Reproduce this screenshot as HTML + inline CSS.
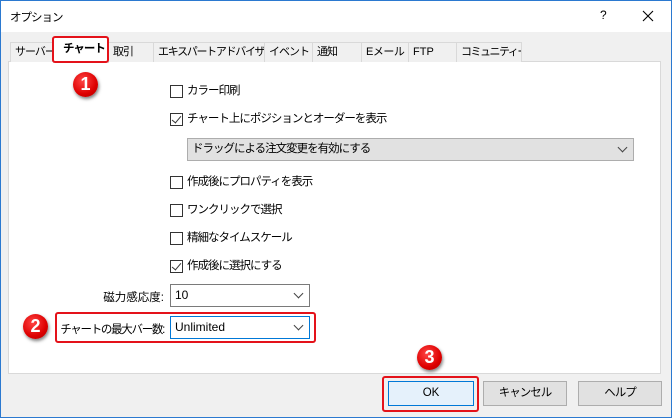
<!DOCTYPE html>
<html><head><meta charset="utf-8"><style>
*{margin:0;padding:0;box-sizing:border-box}
body{width:672px;height:418px;overflow:hidden;background:#f0f0f0;font-family:"Liberation Sans","Noto Sans CJK JP",sans-serif;font-size:11.5px;letter-spacing:-1px;color:#000;position:relative}
.a{position:absolute;white-space:nowrap}
.win{left:0;top:0;width:672px;height:418px;border:1px solid #2b79d0}
.title{left:1px;top:1px;width:670px;height:31px;background:#fff}
.tab{position:absolute;top:42px;height:20px;border:1px solid #d9d9d9;border-bottom:none;background:#f0f0f0;line-height:18px;padding-left:4px;white-space:nowrap;overflow:hidden;font-size:11px}
.panel{left:8px;top:61px;width:653px;height:313px;background:#fff;border:1px solid #d9d9d9}
.cb{position:absolute;left:170px;width:13px;height:13px;border:1px solid #333;background:#fff}
.lbl{position:absolute;left:187px;line-height:14px;white-space:nowrap}
.chk::after{content:"";position:absolute;left:3px;top:0px;width:4px;height:8px;border:solid #333;border-width:0 1.3px 1.3px 0;transform:rotate(40deg)}
.combo{position:absolute;border:1px solid #7a7a7a;background:#fff;line-height:20px;padding-left:4px;font-size:12px;letter-spacing:0}
.arr{position:absolute;right:7px;top:5px;width:7px;height:7px;border:solid #444;border-width:0 1px 1px 0;transform:rotate(45deg)}
.btn{position:absolute;top:381px;height:25px;border:1px solid #adadad;background:#e1e1e1;text-align:center;line-height:23px}
.badge{position:absolute;width:25px;height:25px;border-radius:50%;background:radial-gradient(circle at 40% 35%,#f44 0%,#d00 60%,#a00 100%);color:#fff;font-weight:bold;font-size:18px;letter-spacing:0;text-align:center;line-height:25px;box-shadow:1px 2px 3px rgba(0,0,0,.5)}
.red{position:absolute;border:2px solid #e4121a;border-radius:3px}
</style></head><body>
<div class="a win"></div>
<div class="a title"></div>
<div class="a" style="left:10px;top:9px;letter-spacing:-1px">オプション</div>
<div class="a" style="left:600px;top:8px;font-size:12px;letter-spacing:0">?</div>
<svg class="a" style="left:642px;top:10px" width="12" height="12"><path d="M1 1L11 11M11 1L1 11" stroke="#000" stroke-width="1.1"/></svg>

<div class="a panel"></div>
<div class="tab" style="left:10px;width:43px">サーバー</div>
<div class="tab" style="left:108px;width:46px">取引</div>
<div class="tab" style="left:153px;width:112px;letter-spacing:-1.3px">エキスパートアドバイザ</div>
<div class="tab" style="left:264px;width:49px">イベント</div>
<div class="tab" style="left:312px;width:50px">通知</div>
<div class="tab" style="left:361px;width:48px;letter-spacing:-0.5px">Eメール</div>
<div class="tab" style="left:408px;width:49px;letter-spacing:0">FTP</div>
<div class="tab" style="left:456px;width:66px;letter-spacing:-1.5px">コミュニティー</div>
<div class="tab" style="left:53px;top:37px;height:26px;width:56px;background:#fff;font-weight:bold;padding-left:9px;line-height:22px;font-size:11.5px">チャート</div>
<div class="red" style="left:52px;top:36px;width:57px;height:27px"></div>
<div class="badge" style="left:73px;top:72px">1</div>

<div class="cb" style="top:85px"></div><div class="lbl" style="top:84px">カラー印刷</div>
<div class="cb chk" style="top:113px"></div><div class="lbl" style="top:112px">チャート上にポジションとオーダーを表示</div>
<div class="combo" style="left:187px;top:138px;width:447px;height:23px;background:#e1e1e1;border-color:#adadad;font-size:11.5px;letter-spacing:-1px">ドラッグによる注文変更を有効にする<div class="arr"></div></div>
<div class="cb" style="top:176px"></div><div class="lbl" style="top:175px">作成後にプロパティを表示</div>
<div class="cb" style="top:204px"></div><div class="lbl" style="top:203px">ワンクリックで選択</div>
<div class="cb" style="top:232px"></div><div class="lbl" style="top:231px">精細なタイムスケール</div>
<div class="cb chk" style="top:260px"></div><div class="lbl" style="top:259px">作成後に選択にする</div>

<div class="a" style="right:508px;top:289px;letter-spacing:0">磁力感応度:</div>
<div class="combo" style="left:170px;top:284px;width:140px;height:23px">10<div class="arr"></div></div>
<div class="red" style="left:55px;top:312px;width:261px;height:31px"></div>
<div class="a" style="right:508px;top:321px;letter-spacing:-1.3px">チャートの最大バー数:</div>
<div class="combo" style="left:170px;top:316px;width:140px;height:23px;border-color:#0078d7">Unlimited<div class="arr"></div></div>
<div class="badge" style="left:23px;top:314px">2</div>

<div class="btn" style="left:388px;width:86px;background:#e5f1fb;border-color:#0078d7;letter-spacing:0">OK</div>
<div class="btn" style="left:483px;width:84px">キャンセル</div>
<div class="btn" style="left:578px;width:84px">ヘルプ</div>
<div class="red" style="left:382px;top:376px;width:97px;height:36px"></div>
<div class="badge" style="left:417px;top:345px">3</div>
</body></html>
